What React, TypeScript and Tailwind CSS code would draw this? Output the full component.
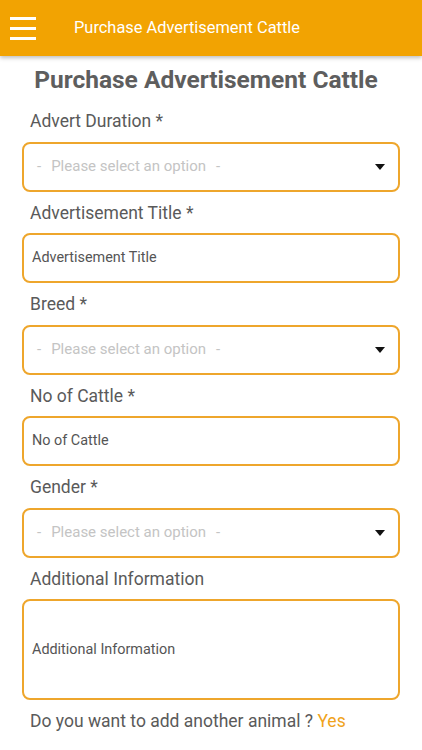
const font = { fontFamily: 'Roboto, "Noto Sans", sans-serif' }

type Field = {
  label: string
  kind: 'select' | 'input' | 'textarea'
  placeholder: string
}

const fields: Field[] = [
  { label: 'Advert Duration *', kind: 'select', placeholder: 'Please select an option' },
  { label: 'Advertisement Title *', kind: 'input', placeholder: 'Advertisement Title' },
  { label: 'Breed *', kind: 'select', placeholder: 'Please select an option' },
  { label: 'No of Cattle *', kind: 'input', placeholder: 'No of Cattle' },
  { label: 'Gender *', kind: 'select', placeholder: 'Please select an option' },
  { label: 'Additional Information', kind: 'textarea', placeholder: 'Additional Information' }
]

const Box = ({ field }: { field: Field }) => {
  if (field.kind === 'select') {
    return (
      <div className="flex h-[50px] items-center justify-between rounded-lg border-2 border-[#eea62c] pl-[13px] pr-[13px]">
        <span className="flex text-[15px] text-[#c4c4c4]">
          <span>-</span>
          <span className="mx-[10px]">{field.placeholder}</span>
          <span>-</span>
        </span>
        <svg width="10" height="6" viewBox="0 0 10 6">
          <path d="M0 0h10L5 6z" fill="#111" />
        </svg>
      </div>
    )
  }
  return (
    <div
      className={`flex items-center rounded-lg border-2 border-[#eea62c] px-[8px] ${
        field.kind === 'textarea' ? 'h-[101px]' : 'h-[50px]'
      }`}
    >
      <span className="text-[14.4px] text-[#555]">{field.placeholder}</span>
    </div>
  )
}

const App = () => {
  return (
    <div className="min-h-[750px] bg-white" style={font}>
      <header className="flex h-[56px] items-center bg-[#f2a302] shadow-[0_2px_4px_rgba(0,0,0,0.25)]">
        <div className="ml-[10px] flex w-[26px] flex-col gap-[7px]">
          <span className="block h-[3px] bg-white" />
          <span className="block h-[3px] bg-white" />
          <span className="block h-[3px] bg-white" />
        </div>
        <h1 className="ml-[38px] text-[16.4px] text-white">Purchase Advertisement Cattle</h1>
      </header>

      <main className="px-[22px]">
        <h2 className="pr-[10px] pt-[8px] text-center text-[24.5px] font-bold leading-[32px] text-[#5e5e5e]">
          Purchase Advertisement Cattle
        </h2>
        <div className="mt-[14px] flex flex-col gap-[10px]">
          {fields.map((field) => (
            <div key={field.label} className="flex flex-col gap-[9px]">
              <label className="pl-[8px] text-[17.5px] leading-[22.5px] text-[#5a5a5a]">{field.label}</label>
              <Box field={field} />
            </div>
          ))}
          <p className="pl-[8px] text-[17.5px] leading-[22.5px] text-[#5a5a5a]">
            Do you want to add another animal ? <span className="text-[#f0a31c]">Yes</span>
          </p>
        </div>
      </main>
    </div>
  )
}

export default App
